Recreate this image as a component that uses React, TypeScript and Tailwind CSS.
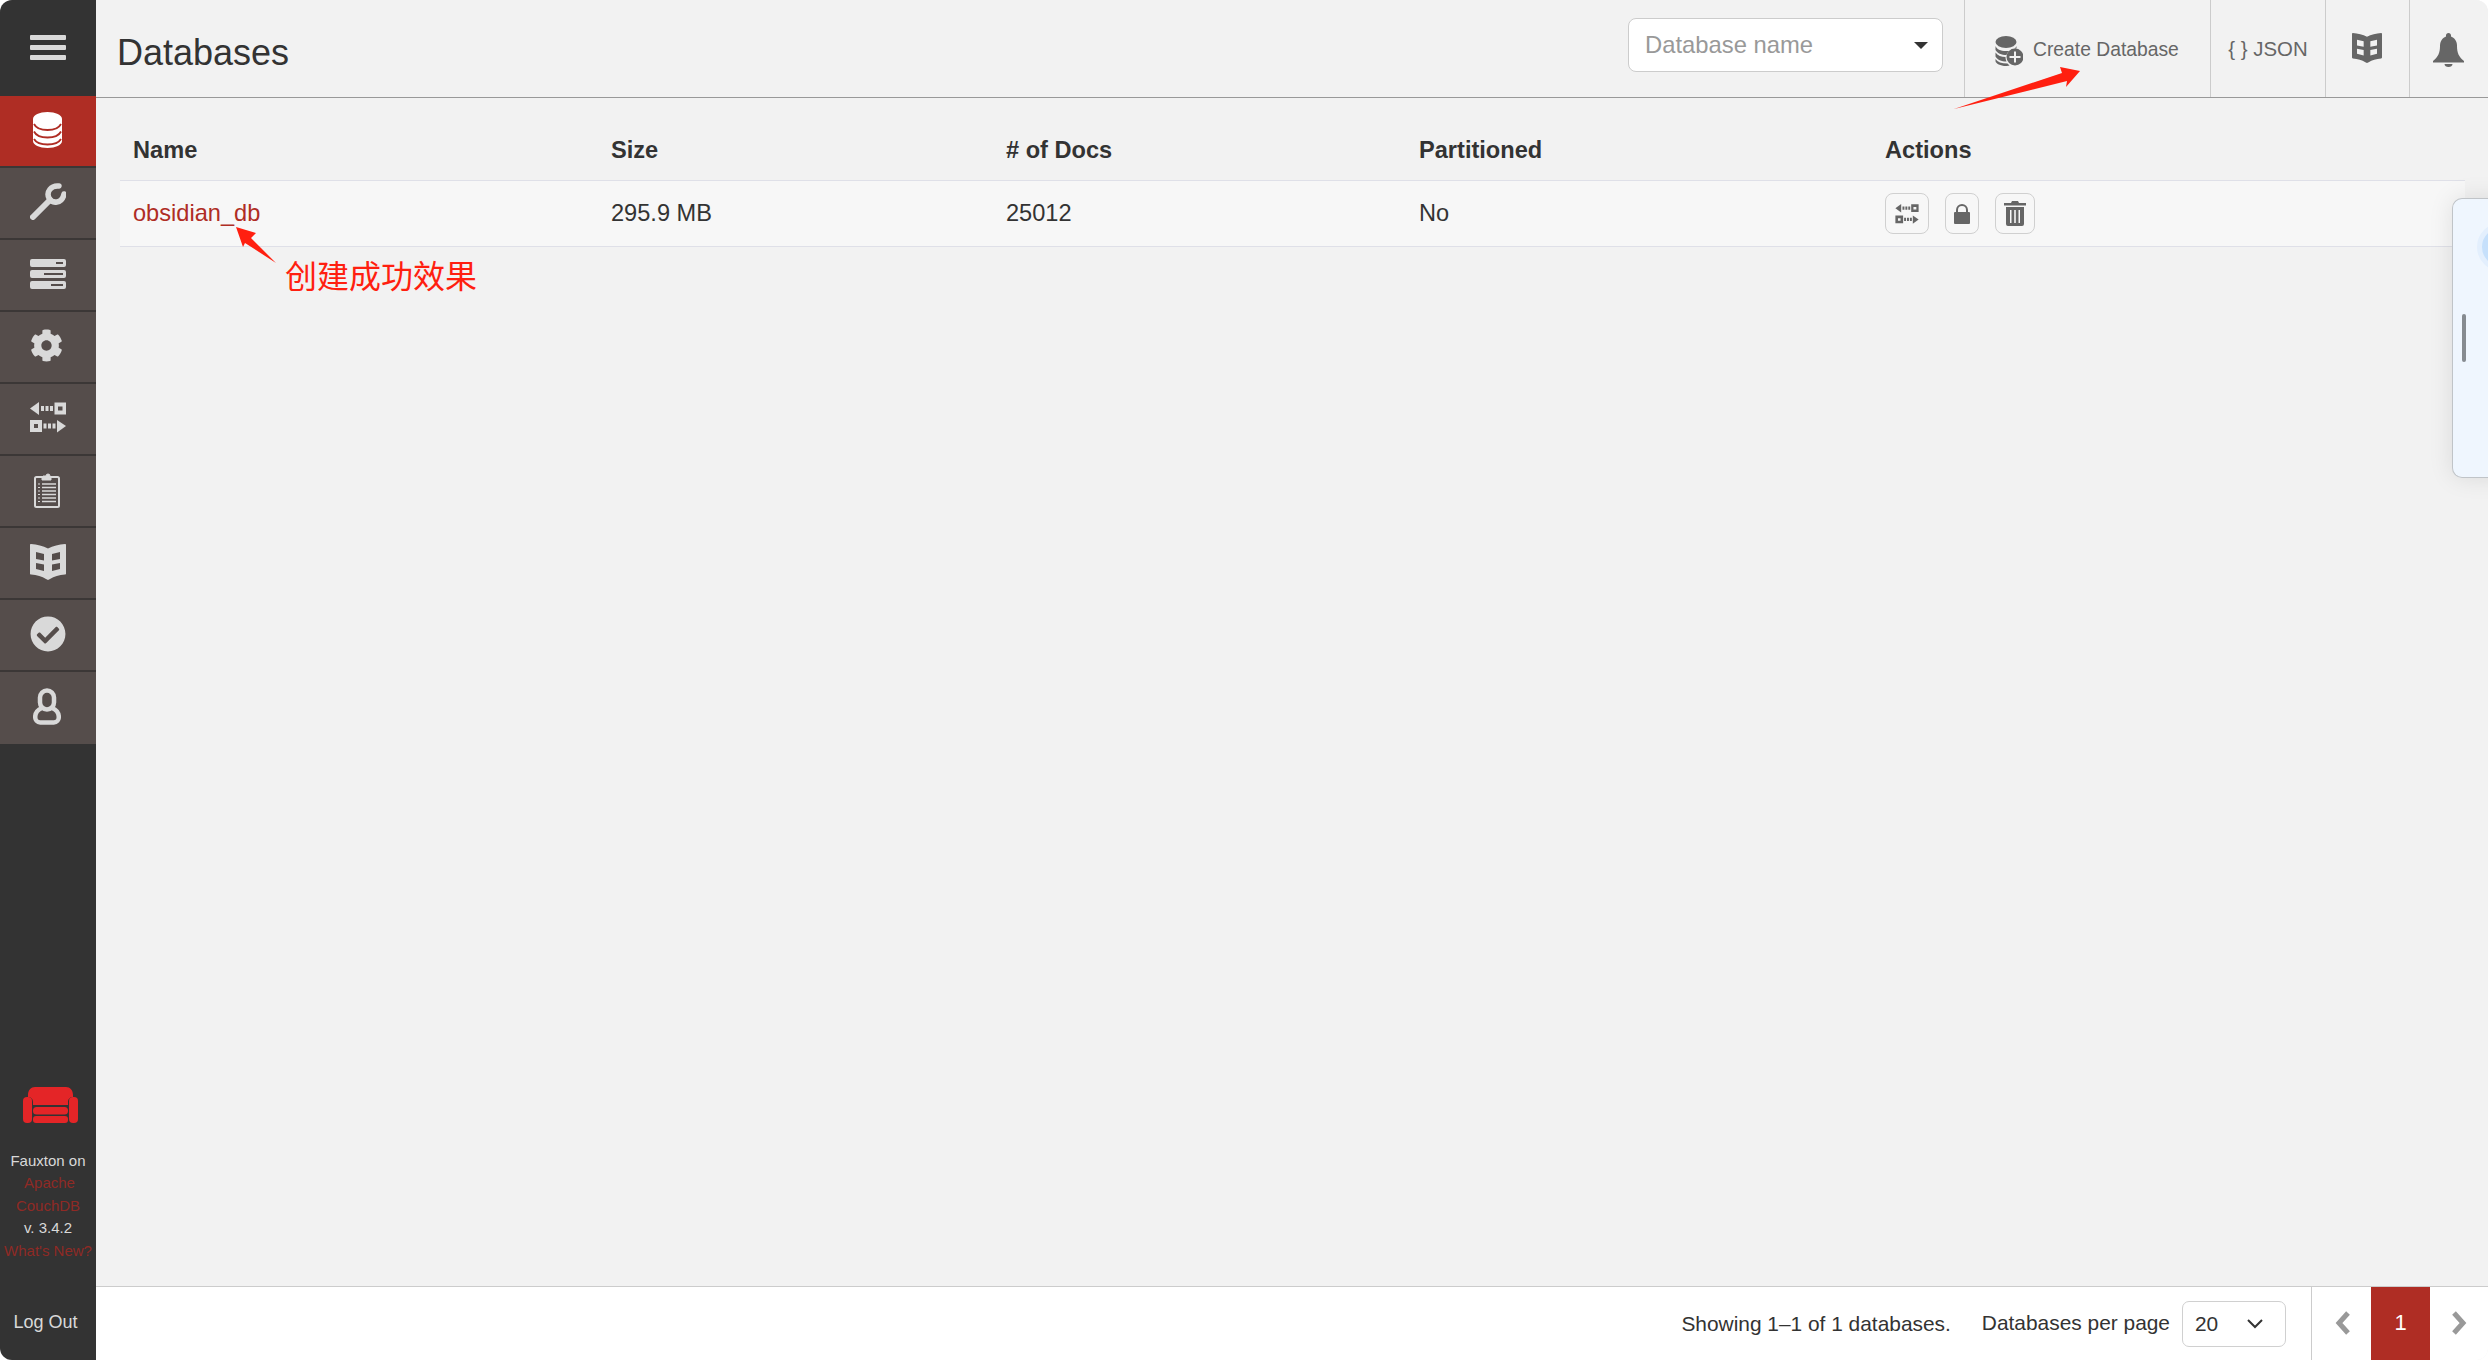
import React from "react";
import { FaCog, FaCheckCircle } from "react-icons/fa";

const Replicate = ({ className = "" }: { className?: string }) => (
  <svg viewBox="0 0 36 31" className={className} fill="currentColor">
    <path d="M0 6.500 9 0v13z" />
    <path d="M11 4h3v5h-3zM15.500 4h3v5h-3zM20 4h3v5h-3z" />
    <path fillRule="evenodd" d="M24.500 .5H36v12H24.500zM28 4.500v4h4.500v-4z" />
    <path fillRule="evenodd" d="M0 18h12v12H0zM4 22v4h4v-4z" />
    <path d="M13.500 21.500h3v5h-3zM18 21.500h3v5h-3zM22.500 21.500h3v5h-3z" />
    <path d="M27 18l9 6-9 6.500z" />
  </svg>
);

const Book = ({ className = "" }: { className?: string }) => (
  <svg viewBox="0 0 36 36" className={className} fill="currentColor">
    <path
      fillRule="evenodd"
      d="M1 0C7 .5 13 2 18 4.500 23 2 29 .5 35 0c.6 0 1 .4 1 1v28.500c0 .6-.4 1-1 1-6 .5-11 2-15 4.500l-2 1-2-1c-4-2.500-9-4-15-4.500-.6 0-1-.4-1-1V1c0-.6.4-1 1-1zM6 8v7l8 1.500V10zM6 19v6l8 2v-6.500zM30 8l-8 2v6.500l8-1.500zM30 19l-8 1.500V27l8-2z"
    />
  </svg>
);

const Nav = ({ active, children }: { active?: boolean; children: React.ReactNode }) => (
  <div
    className={`flex h-[72px] w-full flex-col items-center justify-center border-b-2 border-[#3b3736] pb-[3px] ${
      active ? "bg-[#af2d24] text-white" : "bg-[#554d4b] text-[#d9d9d9]"
    }`}
  >
    {children}
  </div>
);

const IconButton = ({ w, children }: { w: string; children: React.ReactNode }) => (
  <div className={`flex h-[41px] items-center justify-center rounded-[8px] border border-[#d0d0d0] bg-[#f7f7f7] text-[#666] ${w}`}>
    {children}
  </div>
);

const Sidebar = () => (
  <aside className="flex h-full w-[96px] shrink-0 flex-col bg-[#333333]">
    <div className="flex h-[96px] flex-col items-center justify-center gap-[5px] pb-[2px]">
      <span className="h-[5px] w-[36px] rounded-[1px] bg-[#d9d9d9]" />
      <span className="h-[5px] w-[36px] rounded-[1px] bg-[#d9d9d9]" />
      <span className="h-[5px] w-[36px] rounded-[1px] bg-[#d9d9d9]" />
    </div>
    <Nav active>
      <svg viewBox="0 0 29 36" className="mr-[2px] h-[36px] w-[29px]">
        <path d="M0 7C0 3 6.500 0 14.500 0S29 3 29 7v22c0 4-6.500 7-14.500 7S0 33 0 29z" fill="#fff" />
        <path d="M1 12c2 4 7 6 13.500 6S26 16 28 12M1 19.500c2 4 7 6 13.500 6S26 23.500 28 19.500M1 27c2 3.500 7 5.500 13.500 5.500S26 30.500 28 27" fill="none" stroke="#af2d24" strokeWidth="1.800" />
      </svg>
    </Nav>
    <Nav>
      <svg viewBox="0 0 36 37" className="h-[37px] w-[36px]" fill="none" stroke="currentColor" strokeLinecap="round">
        <path d="M3 34 20 17" strokeWidth="6" />
        <path d="M29 3C21 2 16 9 19 15c3 6 13 6 15-4" strokeWidth="5.500" />
      </svg>
    </Nav>
    <Nav>
      <svg viewBox="0 0 36 30" className="h-[30px] w-[36px]" fill="currentColor">
        <path fillRule="evenodd" d="M2 0h32a2 2 0 0 1 2 2v4a2 2 0 0 1-2 2H2a2 2 0 0 1-2-2V2a2 2 0 0 1 2-2zM26 3v2h7V3z" />
        <path fillRule="evenodd" d="M2 11h32a2 2 0 0 1 2 2v4a2 2 0 0 1-2 2H2a2 2 0 0 1-2-2v-4a2 2 0 0 1 2-2zM14 14v2h19v-2z" />
        <path fillRule="evenodd" d="M2 22h32a2 2 0 0 1 2 2v4a2 2 0 0 1-2 2H2a2 2 0 0 1-2-2v-4a2 2 0 0 1 2-2zM21 25v2h12v-2z" />
      </svg>
    </Nav>
    <Nav>
      <FaCog className="mr-[4px] h-[33px] w-[33px]" />
    </Nav>
    <Nav>
      <Replicate className="h-[31px] w-[36px]" />
    </Nav>
    <Nav>
      <svg viewBox="0 0 26 36" className="mr-[2px] h-[36px] w-[26px]" fill="none" stroke="currentColor">
        <rect x="1" y="5" width="24" height="30" rx="1.500" strokeWidth="2" />
        <path d="M9 5V4h3a2 2 0 0 1 4 0v2h1v2H8V5z" fill="currentColor" strokeWidth="1" />
        <path d="M8 12h14M8 15.500h14M8 19h14M8 22.500h14M8 26h14M8 29.500h14" strokeWidth="1.500" />
        <path d="M4 12h2M4 15.500h2M4 19h2M4 22.500h2M4 26h2M4 29.500h2" strokeWidth="1.200" />
      </svg>
    </Nav>
    <Nav>
      <Book className="h-[36px] w-[36px]" />
    </Nav>
    <Nav>
      <FaCheckCircle className="h-[36px] w-[36px]" />
    </Nav>
    <div className="flex h-[72px] w-full flex-col items-center justify-center bg-[#554d4b] pb-[4px] text-[#d9d9d9]">
      <svg viewBox="0 0 28 37" className="mr-[3px] h-[37px] w-[28px]" fill="none" stroke="currentColor" strokeWidth="4.500">
        <rect x="7" y="2.500" width="14" height="19" rx="7" />
        <path d="M9 20C4 22 2.200 25 2.200 29c0 3 2 5.500 5 5.500h13.600c3 0 5-2.500 5-5.500 0-4-1.800-7-6.800-9" />
      </svg>
    </div>
    <div className="mt-auto flex flex-col items-center pb-[26px]">
      <svg viewBox="0 0 55 36" className="ml-[5px] h-[36px] w-[55px]" fill="#e42527">
        <path d="M5 8C5 3 8 0 12 0h31c4 0 7 3 7 8v2c-3 0-5 2-5 5v3H10v-3c0-3-2-5-5-5z" />
        <rect x="0" y="10" width="9" height="26" rx="4" />
        <rect x="46" y="10" width="9" height="26" rx="4" />
        <rect x="10" y="20" width="35" height="7.500" rx="3.500" />
        <rect x="10" y="29" width="35" height="7" rx="3" />
      </svg>
      <div className="mt-[27px] text-center text-[15px] leading-[22.500px] text-[#d9d9d9]">
        <div>Fauxton on</div>
        <div className="pl-[3px] text-[#8f2a25]">Apache</div>
        <div className="text-[#8f2a25]">CouchDB</div>
        <div>v. 3.4.2</div>
        <div className="whitespace-nowrap text-[#8f2a25]">What's New?</div>
      </div>
      <div className="mt-[48px] mr-[5px] text-[18px] leading-[24px] text-[#d9d9d9]">Log Out</div>
    </div>
  </aside>
);

const Header = () => (
  <header className="flex h-[98px] shrink-0 border-b border-[#999999] bg-[#f2f2f2] text-[#666666]">
    <h1 className="ml-[21px] pt-[30px] text-[36px] leading-[46px] text-[#333333]">Databases</h1>
    <div className="mr-[21px] ml-auto mt-[18px] flex h-[54px] w-[315px] items-center justify-between rounded-[8px] border border-[#cccccc] bg-white pr-[14px] pl-[16px]">
      <span className="text-[23.800px] text-[#999999]">Database name</span>
      <span className="h-0 w-0 border-x-[7px] border-t-[7px] border-x-transparent border-t-[#333333]" />
    </div>
    <div className="flex h-[97px] w-[246px] items-center border-l border-[#cccccc] pb-[1px] pl-[30px]">
      <svg viewBox="0 0 28 30" className="mt-[6px] h-[30px] w-[28px]" fill="currentColor">
        <ellipse cx="11" cy="6" rx="10.500" ry="6" />
        <path d="M.5 10c1 3 5 5 10.500 5s9.500-2 10.500-5v2.500c-5 0-9 3-10 6.500-5 0-9.500-2-11-5zM.5 16.500c2 3 6 4.500 10 4.500 0 2 .5 3 1 4.500-5 0-9.500-2-11-5zM.5 23c2 3 6 4.500 12 4.500l2 2c-1 .2-2 .5-3.500.5-5.500 0-10.500-2.500-10.500-5z" />
        <circle cx="20" cy="21" r="8.500" />
        <path d="M20 15.500v11M14.500 21h11" stroke="#f2f2f2" strokeWidth="2" />
      </svg>
      <span className="mt-[4px] ml-[10px] text-[19.300px] whitespace-nowrap">Create Database</span>
    </div>
    <div className="flex h-[97px] w-[115px] items-center justify-center border-l border-[#cccccc]">
      <span className="mt-[1px] text-[20.400px] whitespace-nowrap">{"{ } JSON"}</span>
    </div>
    <div className="flex h-[97px] w-[84px] items-center justify-center border-l border-[#cccccc] pb-[1px]">
      <Book className="mr-[1px] h-[30px] w-[30px]" />
    </div>
    <div className="flex h-[97px] w-[79px] items-start justify-center border-l border-[#cccccc] pt-[33px] pr-[5px] pl-[3px]">
      <svg viewBox="0 0 31 34" className="h-[34px] w-[31px]" fill="currentColor">
        <path d="M15.500 0c1.500 0 2.500 1 2.500 2.500v1c4 1.500 6 5 6 9.500 0 7 2 11 7 15v1.500H0V28c5-4 7-8 7-15 0-4.500 2-8 6-9.500v-1C13 1 14 0 15.500 0z" />
        <path d="M11.500 31h8c0 2-1.800 3-4 3s-4-1-4-3z" />
      </svg>
    </div>
  </header>
);

const Table = () => (
  <section className="relative flex-1 overflow-hidden text-[23.600px] text-[#333333]">
    <div className="grid h-[82px] grid-cols-[478px_395px_413px_466px_1fr] items-center pt-[23px] pl-[37px]">
      <div className="font-bold">Name</div>
      <div className="font-bold">Size</div>
      <div className="font-bold"># of Docs</div>
      <div className="font-bold">Partitioned</div>
      <div className="font-bold">Actions</div>
    </div>
    <div className="mr-[23px] ml-[24px] grid h-[67px] grid-cols-[478px_395px_413px_466px_1fr] items-center border-y border-[#dfe0e8] bg-[#f7f7f7] pl-[13px]">
      <div className="text-[#af2d24]">obsidian_db</div>
      <div>295.9 MB</div>
      <div>25012</div>
      <div>No</div>
      <div className="flex gap-[16px]">
        <IconButton w="w-[44px]">
          <Replicate className="h-[20px] w-[24px]" />
        </IconButton>
        <IconButton w="w-[34px]">
          <svg viewBox="0 0 16 20" className="h-[20px] w-[16px]" fill="none">
            <path d="M3 10V6a5 5 0 0 1 10 0v4" stroke="currentColor" strokeWidth="2" />
            <rect x="0" y="8" width="16" height="12" rx="1" fill="currentColor" />
          </svg>
        </IconButton>
        <IconButton w="w-[40px]">
          <svg viewBox="0 0 22 25" className="h-[25px] w-[22px]" fill="currentColor">
            <path d="M8 0h6l1 2h7v2.500H0V2h7z" />
            <path fillRule="evenodd" d="M2 6h18v17a2 2 0 0 1-2 2H4a2 2 0 0 1-2-2zM6 9v13h1.500V9zM10.200 9v13h1.600V9zM14.500 9v13H16V9z" />
          </svg>
        </IconButton>
      </div>
    </div>
    <div className="absolute top-[100px] left-[2356px] h-[280px] w-[60px] overflow-hidden rounded-l-[10px] border border-r-0 border-[#c0c4c8] bg-[#eff6fe] shadow-[0_0_24px_rgba(0,0,0,0.10)]">
      <div className="absolute top-[24px] left-[24px] h-[48px] w-[48px] rounded-full border-[5px] border-[#e3effd] bg-[#c6e0fb]" />
      <div className="absolute top-[115px] left-[9px] h-[48px] w-[4px] rounded-full bg-[#868b90]" />
    </div>
  </section>
);

const Footer = () => (
  <footer className="flex h-[74px] shrink-0 items-center justify-end border-t border-[#cccccc] bg-white text-[20.900px] text-[#333333]">
    <span className="mt-[1px] whitespace-nowrap">Showing 1–1 of 1 databases.</span>
    <span className="ml-[31px] -mt-[1px] whitespace-nowrap">Databases per page</span>
    <div className="mr-[25px] ml-[12px] flex h-[46px] w-[104px] items-center justify-between rounded-[7px] border border-[#d0d0d0] pr-[22px] pl-[12px]">
      <span>20</span>
      <svg viewBox="0 0 16 10" className="h-[10px] w-[16px]" fill="none" stroke="#333" strokeWidth="2">
        <path d="M1 1l7 7 7-7" />
      </svg>
    </div>
    <div className="flex h-full w-[177px] items-center border-l border-[#cccccc]">
      <svg viewBox="0 0 16 24" className="-mt-[2px] ml-[23px] h-[24px] w-[16px]" fill="none" stroke="#999" strokeWidth="5">
        <path d="M13 2 4 12l9 10" />
      </svg>
      <div className="ml-[20px] flex h-full w-[59px] items-center justify-center bg-[#af2d24] pb-[2px] text-[22px] text-white">1</div>
      <svg viewBox="0 0 16 24" className="-mt-[2px] ml-[21px] h-[24px] w-[16px]" fill="none" stroke="#999" strokeWidth="5">
        <path d="M3 2l9 10-9 10" />
      </svg>
    </div>
  </footer>
);

export default function App() {
  return (
    <div
      className="relative h-[1360px] w-[2488px] overflow-hidden bg-white"
      style={{ fontFamily: '"Liberation Sans", Arial, sans-serif' }}
    >
      <div className="flex h-full w-full overflow-hidden rounded-[12px] bg-[#f2f2f2]">
        <Sidebar />
        <main className="flex h-full min-w-0 flex-1 flex-col">
          <Header />
          <Table />
          <Footer />
        </main>
      </div>
      <svg viewBox="0 0 2488 1360" className="pointer-events-none absolute inset-0 h-[1360px] w-[2488px]" fill="#ff1f10">
        <polygon points="1954,109 2062,73 2060,67 2080,71 2066,87 2067,81" />
        <polygon points="236,227 256,233 251,238 276,263 245,243 243,247" />
      </svg>
      <div
        className="absolute top-[253px] left-[285px] text-[32px] leading-[42px] whitespace-nowrap text-[#ff1f10]"
        style={{ fontFamily: '"Noto Sans CJK SC", sans-serif' }}
      >
        创建成功效果
      </div>
    </div>
  );
}
